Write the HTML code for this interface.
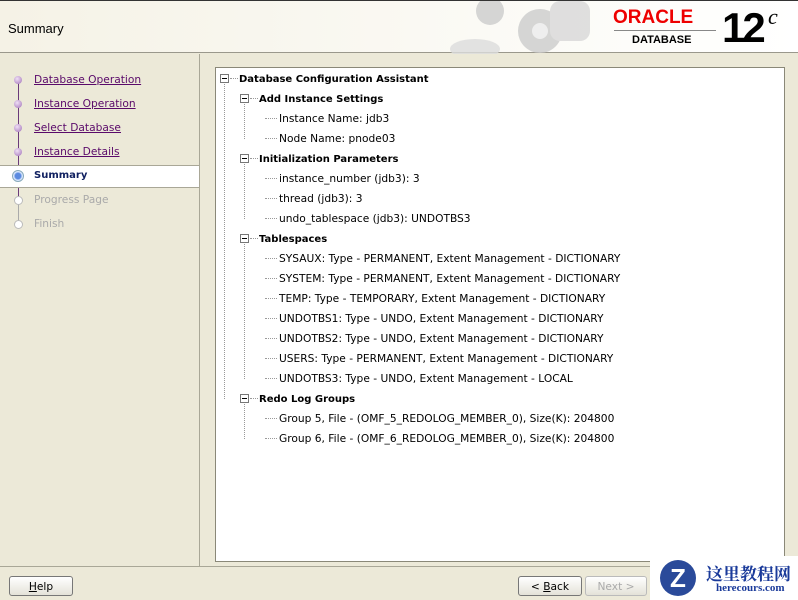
<!DOCTYPE html><html><head><style>
body{margin:0;width:798px;height:600px;overflow:hidden;background:#ece9d8;font-family:"DejaVu Sans","Liberation Sans",sans-serif;font-size:10.65px;position:relative}
.a{position:absolute}
#hd{left:0;top:0;width:798px;height:53px;background:linear-gradient(90deg,#f5f2e6,#fbfaf5 60%,#fff);border-top:1px solid #333;border-bottom:1px solid #9a988c;box-sizing:border-box}
#lp{left:0;top:54px;width:199px;height:512px;border-right:1px solid #a9a797}
.st{position:absolute;left:34px;color:#5a0a6a;text-decoration:underline}
.dot{position:absolute;left:14px;width:8px;height:8px;border-radius:50%;background:radial-gradient(circle at 40% 35%,#f0e0f5,#a070b8)}
#box{left:215px;top:67px;width:568px;height:493px;background:#fff;border:1px solid #8a8878}
.t{position:absolute;white-space:nowrap;color:#000}
.b{font-weight:bold;font-size:10px;margin-top:1px}
.pm{position:absolute;width:7px;height:7px;border:1px solid #777;background:#fff}
.pm:after{content:"";position:absolute;left:1px;top:3px;width:5px;height:1px;background:#000}
.hl{position:absolute;border-top:1px dotted #999;width:10px}
.vl{position:absolute;border-left:1px dotted #999}
.btn{position:absolute;height:20px;border:1px solid #777;border-radius:3px;background:linear-gradient(#fff,#e4e2d8);text-align:center;line-height:20px;box-sizing:border-box}
</style></head><body>
<div id="hd" class="a">
<div class="a" style="left:8px;top:20px;font:13px 'Liberation Sans',sans-serif">Summary</div>
<svg class="a" style="left:440px;top:0" width="160" height="53"><g fill="#ccc" opacity=".8"><circle cx="100" cy="30" r="22"/><circle cx="50" cy="10" r="14"/><rect x="110" y="0" width="40" height="40" rx="10" fill="#d8d8d8"/><ellipse cx="35" cy="48" rx="25" ry="10" fill="#ddd"/></g><circle cx="100" cy="30" r="8" fill="#eee"/></svg>
<div class="a" style="left:613px;top:6px;color:#e00;font:bold 19px 'Liberation Sans',sans-serif">ORACLE</div>
<div class="a" style="left:614px;top:29px;width:102px;border-top:1px solid #888"></div>
<div class="a" style="left:632px;top:33px;font:bold 11px 'Liberation Sans',sans-serif">DATABASE</div>
<div class="a" style="left:722px;top:5px;font:bold 42px 'Liberation Sans',sans-serif;letter-spacing:-3px;line-height:44px">12</div>
<div class="a" style="left:768px;top:3px;font:italic 22px 'Liberation Serif',serif">c</div>
</div>
<div id="lp" class="a">
<div class="a" style="left:18px;top:26px;width:1px;height:130px;background:#6a3a7a"></div>
<div class="a" style="left:18px;top:150px;width:1px;height:24px;background:#aaa"></div>
<div class="a" style="left:0;top:111px;width:199px;height:21px;background:#fff;border-top:1px solid #a9a797;border-bottom:1px solid #a9a797"></div>
<div class="dot" style="top:22px"></div><a class="st" style="top:19px">Database Operation</a>
<div class="dot" style="top:46px"></div><a class="st" style="top:43px">Instance Operation</a>
<div class="dot" style="top:70px"></div><a class="st" style="top:67px">Select Database</a>
<div class="dot" style="top:94px"></div><a class="st" style="top:91px">Instance Details</a>
<div class="a" style="left:12px;top:116px;width:10px;height:10px;border-radius:50%;border:1px solid #8ab;background:radial-gradient(circle,#5a8ae0 40%,#dbe8ff 60%)"></div>
<div class="a" style="left:34px;top:116px;color:#102060;font-weight:bold;font-size:10px">Summary</div>
<div class="dot" style="top:142px;background:#fff;border:1px solid #bbb;width:7px;height:7px"></div><div class="a" style="left:34px;top:139px;color:#aaa">Progress Page</div>
<div class="dot" style="top:166px;background:#fff;border:1px solid #bbb;width:7px;height:7px"></div><div class="a" style="left:34px;top:163px;color:#aaa">Finish</div>
</div>
<div id="box" class="a">
<div class="vl" style="left:8px;top:16px;height:315px"></div>
<div class="vl" style="left:28px;top:36px;height:35px"></div>
<div class="vl" style="left:28px;top:96px;height:55px"></div>
<div class="vl" style="left:28px;top:176px;height:135px"></div>
<div class="vl" style="left:28px;top:336px;height:35px"></div>
<div class="pm" style="left:4px;top:6px"></div><div class="hl" style="left:14px;top:10px;width:8px"></div><div class="t b" style="left:23px;top:5px">Database Configuration Assistant</div>
<div class="pm" style="left:24px;top:26px"></div><div class="hl" style="left:34px;top:30px;width:8px"></div><div class="t b" style="left:43px;top:25px">Add Instance Settings</div>
<div class="hl" style="left:49px;top:50px;width:12px"></div><div class="t" style="left:63px;top:44px">Instance Name: jdb3</div>
<div class="hl" style="left:49px;top:70px;width:12px"></div><div class="t" style="left:63px;top:64px">Node Name: pnode03</div>
<div class="pm" style="left:24px;top:86px"></div><div class="hl" style="left:34px;top:90px;width:8px"></div><div class="t b" style="left:43px;top:85px">Initialization Parameters</div>
<div class="hl" style="left:49px;top:110px;width:12px"></div><div class="t" style="left:63px;top:104px">instance_number (jdb3): 3</div>
<div class="hl" style="left:49px;top:130px;width:12px"></div><div class="t" style="left:63px;top:124px">thread (jdb3): 3</div>
<div class="hl" style="left:49px;top:150px;width:12px"></div><div class="t" style="left:63px;top:144px">undo_tablespace (jdb3): UNDOTBS3</div>
<div class="pm" style="left:24px;top:166px"></div><div class="hl" style="left:34px;top:170px;width:8px"></div><div class="t b" style="left:43px;top:165px">Tablespaces</div>
<div class="hl" style="left:49px;top:190px;width:12px"></div><div class="t" style="left:63px;top:184px">SYSAUX: Type - PERMANENT, Extent Management - DICTIONARY</div>
<div class="hl" style="left:49px;top:210px;width:12px"></div><div class="t" style="left:63px;top:204px">SYSTEM: Type - PERMANENT, Extent Management - DICTIONARY</div>
<div class="hl" style="left:49px;top:230px;width:12px"></div><div class="t" style="left:63px;top:224px">TEMP: Type - TEMPORARY, Extent Management - DICTIONARY</div>
<div class="hl" style="left:49px;top:250px;width:12px"></div><div class="t" style="left:63px;top:244px">UNDOTBS1: Type - UNDO, Extent Management - DICTIONARY</div>
<div class="hl" style="left:49px;top:270px;width:12px"></div><div class="t" style="left:63px;top:264px">UNDOTBS2: Type - UNDO, Extent Management - DICTIONARY</div>
<div class="hl" style="left:49px;top:290px;width:12px"></div><div class="t" style="left:63px;top:284px">USERS: Type - PERMANENT, Extent Management - DICTIONARY</div>
<div class="hl" style="left:49px;top:310px;width:12px"></div><div class="t" style="left:63px;top:304px">UNDOTBS3: Type - UNDO, Extent Management - LOCAL</div>
<div class="pm" style="left:24px;top:326px"></div><div class="hl" style="left:34px;top:330px;width:8px"></div><div class="t b" style="left:43px;top:325px">Redo Log Groups</div>
<div class="hl" style="left:49px;top:350px;width:12px"></div><div class="t" style="left:63px;top:344px">Group 5, File - (OMF_5_REDOLOG_MEMBER_0), Size(K): 204800</div>
<div class="hl" style="left:49px;top:370px;width:12px"></div><div class="t" style="left:63px;top:364px">Group 6, File - (OMF_6_REDOLOG_MEMBER_0), Size(K): 204800</div>
</div>
<div class="a" style="left:0;top:566px;width:798px;border-top:1px solid #a9a797"></div>
<div class="btn" style="left:9px;top:576px;width:64px"><u>H</u>elp</div>
<div class="btn" style="left:518px;top:576px;width:64px">&lt; <u>B</u>ack</div>
<div class="btn" style="left:585px;top:576px;width:62px;color:#aaa;border-color:#bbb">Next &gt;</div>
<div class="a" style="left:650px;top:556px;width:148px;height:44px;background:#fff"></div>
<div class="a" style="left:660px;top:560px;width:36px;height:36px;border-radius:50%;background:#2a4a9a;color:#fff;font:bold 26px 'Liberation Sans';text-align:center;line-height:36px">Z</div>
<div class="a" style="left:706px;top:560px;color:#1a3a9a;font:bold 17px 'Noto Serif CJK SC',serif">这里教程网</div>
<div class="a" style="left:716px;top:582px;color:#1a3a9a;font:bold 11px 'Liberation Serif',serif">herecours.com</div>
</body></html>
